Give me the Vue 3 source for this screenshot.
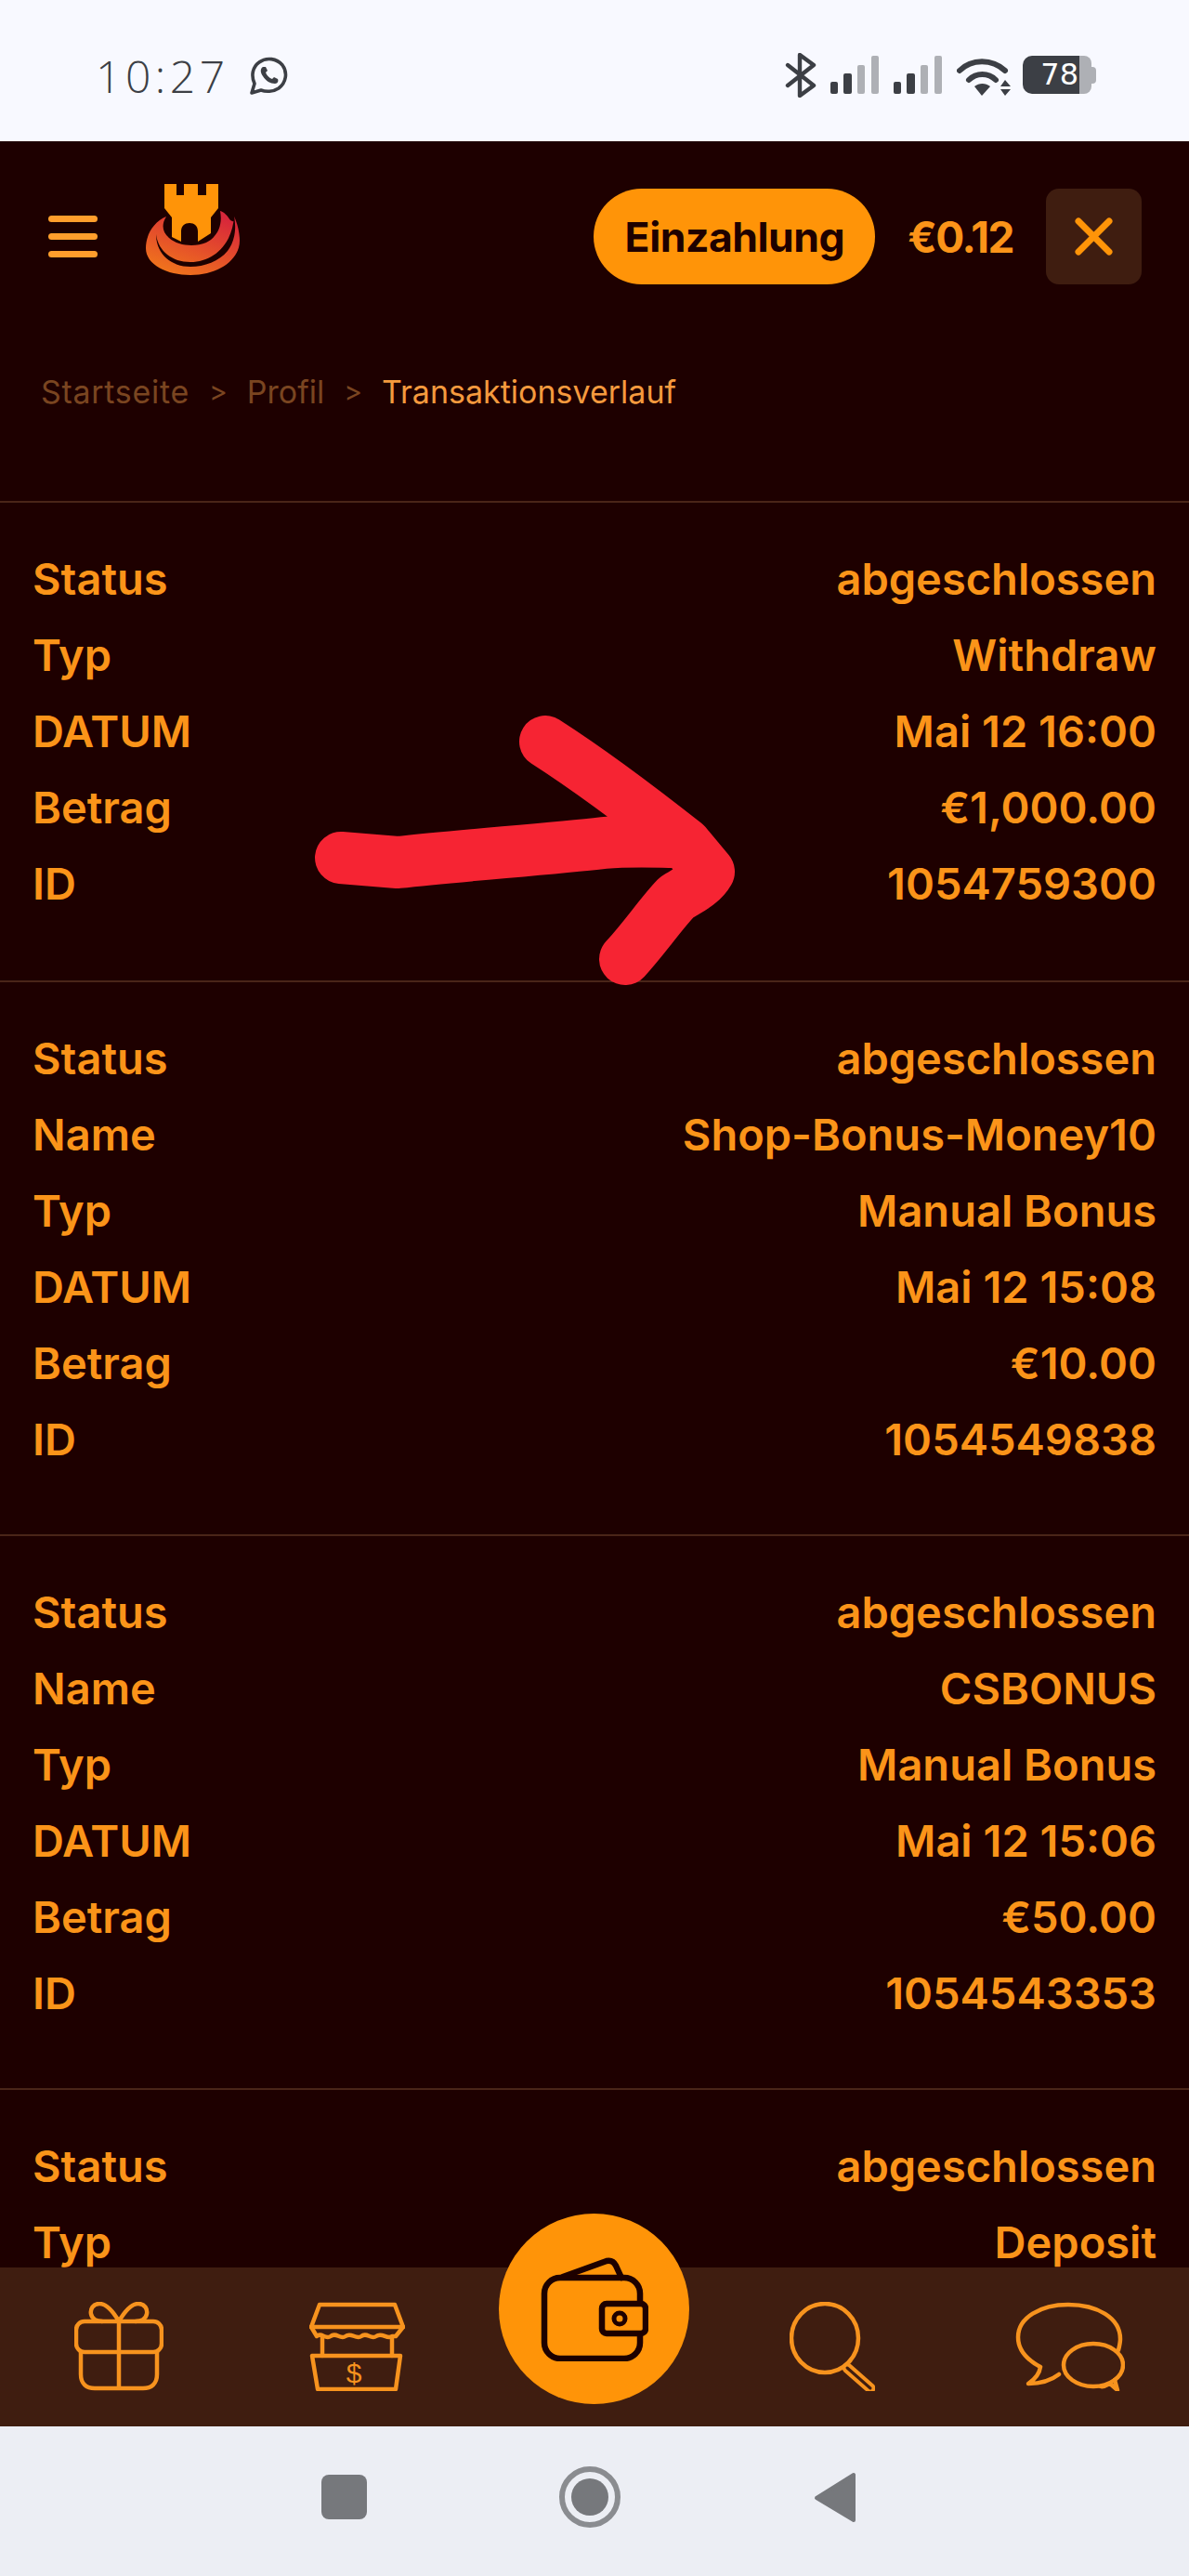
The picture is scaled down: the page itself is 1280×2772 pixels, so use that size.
<script setup>
const records = [
  [['Status', 'abgeschlossen'], ['Typ', 'Withdraw'], ['DATUM', 'Mai 12 16:00'], ['Betrag', '€1,000.00'], ['ID', '1054759300']],
  [['Status', 'abgeschlossen'], ['Name', 'Shop-Bonus-Money10'], ['Typ', 'Manual Bonus'], ['DATUM', 'Mai 12 15:08'], ['Betrag', '€10.00'], ['ID', '1054549838']],
  [['Status', 'abgeschlossen'], ['Name', 'CSBONUS'], ['Typ', 'Manual Bonus'], ['DATUM', 'Mai 12 15:06'], ['Betrag', '€50.00'], ['ID', '1054543353']],
  [['Status', 'abgeschlossen'], ['Typ', 'Deposit']],
]
</script>

<template>
  <div class="phone">
    <div class="status-bar">
      <span class="time">10:27</span>
      <svg class="whatsapp" width="41" height="41" viewBox="0 0 41 41" fill="none">
        <path d="M2 39 L5 29 C1 20 3 11 10 6 C18 0 29 2 35 9 C41 17 39 28 31 34 C25 38 17 38 12 36 Z" stroke="#3c3f45" stroke-width="3.6" stroke-linejoin="round" />
        <path d="M14 11 C11 13 11 17 14 21 C17 26 22 29 27 29 C30 29 31 26 30 24 L26 22 L24 24 C21 23 18 20 17 17 L19 15 L17 11 Z" fill="#3c3f45" />
      </svg>
      <div class="status-right">
        <svg width="34" height="48" viewBox="0 0 34 48" fill="none">
          <path d="M3 13 L31 35 L16 46 V2 L31 13 L3 35" stroke="#3c3f45" stroke-width="4.4" stroke-linejoin="round" stroke-linecap="round" />
        </svg>
        <svg class="signal" width="53" height="41" viewBox="0 0 53 41">
          <rect x="0" y="28" width="8" height="13" rx="2" fill="#3c3f45" />
          <rect x="14" y="19" width="9" height="22" rx="2" fill="#3c3f45" />
          <rect x="29" y="10" width="8" height="31" rx="2" fill="#aeb0b5" />
          <rect x="44" y="0" width="8" height="41" rx="2" fill="#aeb0b5" />
        </svg>
        <svg class="signal" width="53" height="41" viewBox="0 0 53 41">
          <rect x="0" y="28" width="8" height="13" rx="2" fill="#3c3f45" />
          <rect x="14" y="19" width="9" height="22" rx="2" fill="#3c3f45" />
          <rect x="29" y="10" width="8" height="31" rx="2" fill="#aeb0b5" />
          <rect x="44" y="0" width="8" height="41" rx="2" fill="#aeb0b5" />
        </svg>
        <svg class="wifi" width="58" height="41" viewBox="0 0 58 41" fill="none">
          <path d="M3 14 C16 1 38 1 52 14" stroke="#3c3f45" stroke-width="6" stroke-linecap="round" />
          <path d="M13 24 C21 16 34 16 42 24" stroke="#3c3f45" stroke-width="6" stroke-linecap="round" />
          <path d="M19 31 C24 27 31 27 36 31 L27 41 Z" fill="#3c3f45" />
          <path d="M52 24 L58 31 H47 Z M47 34 H58 L52 41 Z" fill="#3c3f45" />
        </svg>
        <div class="battery">
          <span class="battery-fill">78</span>
          <span class="battery-rest"></span>
          <span class="battery-cap"></span>
        </div>
      </div>
    </div>

    <div class="main">
      <header class="header">
        <div class="burger"><i></i><i></i><i></i></div>
        <svg class="logo" width="150" height="130" viewBox="0 0 150 130">
          <defs>
            <linearGradient id="swoosh" x1="0.8" y1="0.1" x2="0.3" y2="1">
              <stop offset="0" stop-color="#d8273a" />
              <stop offset="1" stop-color="#f0741c" />
            </linearGradient>
          </defs>
          <path d="M49 56 C35 62 27 76 27 90 C27 108 50 119 75 119 C106 119 128 102 128 82 C128 72 125 62 122 56 C123 62 121 62 118 60 C114 54 111 51 107 50 C110 66 104 78 92 84 C80 89 62 88 52 79 C44 72 44 64 49 56 Z" fill="url(#swoosh)" />
          <path d="M38 75 C40 92 54 105 75 105 C100 105 120 86 122 56 C125 70 122 84 115 93 C106 104 90 110 75 110 C54 110 38 96 38 75 Z" fill="#1e0000" />
          <path d="M47 21 H60 V33 H68 V21 H83 V33 H92 V21 H105 V47 L97 57 V74 L83 83 V72 C83 66 79 63 74 63 C69 63 65 66 65 72 V83 L55 78 V57 L47 47 Z" fill="#ff9408" />
        </svg>
        <button class="deposit">Einzahlung</button>
        <span class="balance">€0.12</span>
        <div class="close">
          <svg width="41" height="41" viewBox="0 0 41 41" fill="none">
            <path d="M4 4 L37 37 M37 4 L4 37" stroke="#ff9408" stroke-width="7" stroke-linecap="round" />
          </svg>
        </div>
      </header>

      <nav class="crumbs">
        <span class="crumb">Startseite</span>
        <span class="sep">&gt;</span>
        <span class="crumb">Profil</span>
        <span class="sep">&gt;</span>
        <span class="crumb current">Transaktionsverlauf</span>
      </nav>

      <section v-for="(record, i) in records" :key="i" class="record">
        <div v-for="row in record" :key="row[0]" class="row">
          <span>{{ row[0] }}</span>
          <span>{{ row[1] }}</span>
        </div>
      </section>

      <!-- red marker arrow painted on top of the screenshot -->
      <svg class="arrow" width="1280" height="300" viewBox="0 0 1280 300" fill="none">
        <path d="M367 153 L428 158 C500 150 590 144 650 137 C680 134 710 136 735 136 M587 28 C640 62 695 104 738 138 L763 168 C755 182 740 188 728 196 C710 215 695 238 673 262" stroke="#f62433" stroke-width="56" stroke-linecap="round" stroke-linejoin="round" />
      </svg>
    </div>

    <div class="tabbar">
      <svg width="96" height="96" viewBox="0 0 96 96" fill="none" stroke="#f7931e" stroke-width="4.5" stroke-linejoin="round" stroke-linecap="round">
        <path d="M48 21 C41 9 34 2 27 2 C20 2 17 8 18 13 C19 18 24 21 30 21 M48 21 C55 9 62 2 69 2 C76 2 79 8 78 13 C77 18 72 21 66 21" />
        <rect x="2" y="21" width="92" height="33" rx="9" />
        <path d="M7 54 V78 C7 88 13 93 22 93 H74 C83 93 89 88 89 78 V54 M48 21 V93" />
      </svg>
      <svg class="store" width="103" height="96" viewBox="0 0 103 96" fill="none" stroke="#f7931e" stroke-width="4.5" stroke-linejoin="round" stroke-linecap="round">
        <path d="M11 3 H92 L101 27 H2 Z" />
        <path d="M2 27 L8 37 C13 32 17 41 23 37 C29 32 33 41 39 37 C45 32 50 41 56 37 C62 32 66 41 72 37 C78 32 84 41 89 37 L93 37 L101 27" />
        <path d="M14 38 V58 M89 38 V58" />
        <path d="M3 58 H98 L93 94 H9 Z" />
        <text class="dollar" x="48" y="87" text-anchor="middle">$</text>
      </svg>
      <div class="wallet-btn">
        <svg width="116" height="112" viewBox="0 0 116 112" fill="none" stroke="#1e0000" stroke-width="6.5" stroke-linejoin="round" stroke-linecap="round">
          <rect x="4" y="22" width="103" height="87" rx="17" />
          <path d="M24 21 L71 4 C76 3 79 5 81 9 L87 22" />
          <rect x="66" y="50" width="47" height="32" rx="5" fill="#ff9408" />
          <circle cx="85" cy="66" r="6" stroke-width="5" />
        </svg>
      </div>
      <svg width="92" height="96" viewBox="0 0 92 96" fill="none" stroke-linecap="round">
        <ellipse cx="38" cy="39" rx="36" ry="37" stroke="#f7931e" stroke-width="4.5" />
        <path d="M62 71 L87 93" stroke="#f7931e" stroke-width="11" />
        <path d="M62 71 L87 93" stroke="#3f1d10" stroke-width="3" />
      </svg>
      <svg class="chat" width="118" height="96" viewBox="0 0 118 96" fill="none" stroke="#f7931e" stroke-width="4.5" stroke-linejoin="round" stroke-linecap="round">
        <path d="M27 70 C12 62 3 52 3 38 C3 17 27 3 57 3 C88 3 113 17 113 40 C113 44 112 48 111 52 M47 78 C38 85 25 88 14 88 C20 84 26 78 27 70" />
        <ellipse cx="84" cy="68" rx="32" ry="23" />
        <path d="M92 91 C95 93 100 88 102 88 L110 95 L107 84" />
      </svg>
    </div>

    <div class="navbar">
      <span class="nav-square"></span>
      <span class="nav-circle"><i></i></span>
      <svg width="45" height="55" viewBox="0 0 45 55">
        <path d="M43 3 V52 L3 28 Z" fill="#76787c" stroke="#76787c" stroke-width="4" stroke-linejoin="round" />
      </svg>
    </div>
  </div>
</template>

<style scoped>
.phone {
  width: 1280px;
  height: 2772px;
  display: flex;
  flex-direction: column;
  position: relative;
  overflow: hidden;
  background: #1e0000;
  font-family: Inter, "Liberation Sans", sans-serif;
}

.status-bar {
  height: 152px;
  flex: none;
  background: #f8f9ff;
  display: flex;
  align-items: flex-start;
  padding: 57px 100px 0 103px;
  box-sizing: border-box;
  color: #3c3f45;
}
.time {
  font-size: 48px;
  font-weight: 300;
  line-height: 50px;
  letter-spacing: 4.5px;
  font-family: "Open Sans", sans-serif;
}
.whatsapp {
  margin: 4px 0 0 22px;
}
.status-right {
  margin-left: auto;
  display: flex;
  align-items: flex-start;
}
.signal {
  margin: 3px 0 0 15px;
}
.wifi {
  margin: 5px 0 0 15px;
}
.battery {
  margin: 3px 0 0 13px;
  display: flex;
  align-items: center;
  height: 41px;
}
.battery-fill {
  width: 61px;
  height: 41px;
  background: #3c3f45;
  border-radius: 10px 0 0 10px;
  color: #fff;
  font-size: 32px;
  line-height: 41px;
  text-align: right;
  padding-right: 1px;
  box-sizing: border-box;
  font-family: "DejaVu Sans", sans-serif;
}
.battery-rest {
  width: 13px;
  height: 41px;
  background: #aeb0b5;
  border-radius: 0 8px 8px 0;
}
.battery-cap {
  width: 5px;
  height: 18px;
  background: #aeb0b5;
  border-radius: 0 4px 4px 0;
}

.main {
  flex: 1;
  min-height: 0;
  overflow: hidden;
  position: relative;
}

.header {
  display: flex;
  align-items: center;
  height: 103px;
  margin-top: 51px;
  padding: 0 51px 0 52px;
}
.burger {
  width: 53px;
  display: flex;
  flex-direction: column;
  gap: 12px;
}
.burger i {
  display: block;
  height: 7px;
  border-radius: 4px;
  background: #ff9e2c;
}
.logo {
  margin: -26px 0 0 25px;
}
.deposit {
  margin-left: auto;
  width: 303px;
  height: 103px;
  border: 0;
  border-radius: 52px;
  background: #ff9408;
  color: #1e0000;
  font: 700 44.5px Inter, sans-serif;
  letter-spacing: -0.5px;
}
.balance {
  margin-left: 35px;
  color: #fb9419;
  font-size: 46px;
  font-weight: 700;
  letter-spacing: -1.5px;
}
.close {
  margin-left: 35px;
  width: 103px;
  height: 103px;
  border-radius: 14px;
  background: #3f1d10;
  display: flex;
  align-items: center;
  justify-content: center;
}

.crumbs {
  display: flex;
  align-items: center;
  height: 40px;
  margin-top: 95px;
  padding-left: 44px;
  font-size: 34px;
  color: #7a4520;
}
.crumb:first-child {
  letter-spacing: 0.7px;
}
.crumb.current {
  color: #f59a3e;
}
.sep {
  margin: 0 21px;
  font-size: 30px;
}

.record {
  padding: 41px 35px 61px;
  border-top: 2px solid #4a2518;
}
.record:first-of-type {
  margin-top: 98px;
  padding-bottom: 63px;
}
.row {
  display: flex;
  justify-content: space-between;
  height: 82px;
  line-height: 82px;
  font-size: 47px;
  font-weight: 600;
  color: #fb9419;
}

.arrow {
  position: absolute;
  left: 0;
  top: 618px;
  pointer-events: none;
}

.tabbar {
  height: 171px;
  flex: none;
  background: #3f1d10;
  display: flex;
  align-items: flex-start;
  padding: 37px 69px 0 80px;
  box-sizing: border-box;
  position: relative;
}
.store {
  margin: 0 414px 0 157px;
}
.chat {
  margin-left: 151px;
}
.dollar {
  font: 400 30px "Liberation Sans", sans-serif;
  fill: #f7931e;
  stroke: none;
}
.wallet-btn {
  position: absolute;
  left: 537px;
  top: -58px;
  width: 205px;
  height: 205px;
  border-radius: 50%;
  background: #ff9408;
  display: flex;
  align-items: center;
  justify-content: center;
}

.navbar {
  height: 161px;
  flex: none;
  background: #eceef4;
  display: flex;
  align-items: center;
  padding: 0 0 9px 346px;
  box-sizing: border-box;
}
.nav-square {
  width: 49px;
  height: 48px;
  border-radius: 8px;
  background: #76787c;
}
.nav-circle {
  width: 66px;
  height: 66px;
  margin-left: 207px;
  border: 6px solid #8a8c90;
  border-radius: 50%;
  box-sizing: border-box;
  display: flex;
  align-items: center;
  justify-content: center;
}
.nav-circle i {
  width: 40px;
  height: 40px;
  border-radius: 50%;
  background: #76787c;
}
.navbar svg {
  margin-left: 208px;
}
</style>

<style>
body {
  margin: 0;
}
</style>
